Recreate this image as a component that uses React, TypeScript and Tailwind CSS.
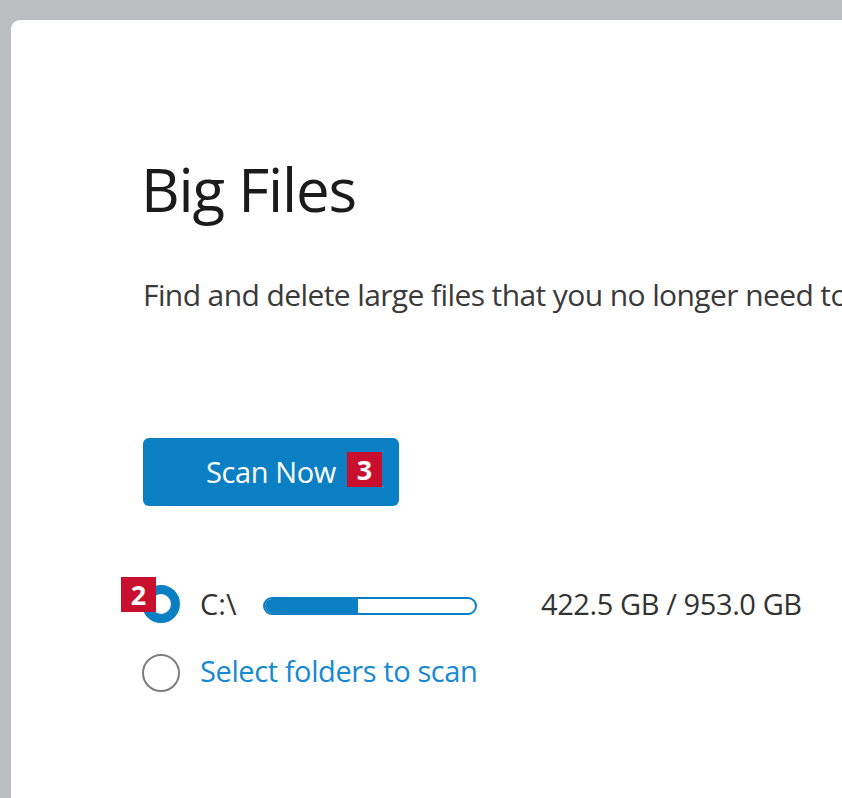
import React from "react";

const font = { fontFamily: '"Open Sans", "Noto Sans", sans-serif' };

function Badge({ n, className }: { n: string; className?: string }) {
  return (
    <span
      className={`flex h-[35px] w-[35px] items-center justify-center bg-[#c8102e] text-[27px] font-bold leading-none text-white ${className ?? ""}`}
    >
      {n}
    </span>
  );
}

export default function App() {
  const used = 422.5;
  const total = 953.0;
  const pct = (used / total) * 100;

  return (
    <div
      className="h-[798px] w-[842px] overflow-hidden bg-[#bbbdbf] pl-[11px] pt-[20px]"
      style={font}
    >
      <div className="h-full w-full rounded-tl-[9px] bg-white pl-[132px] pt-[133px]">
        <h1 className="-ml-[2px] text-[60px] leading-[72px] tracking-[-1.2px] text-[#1b1b1b]">Big Files</h1>
        <p className="mt-[52px] whitespace-nowrap text-[30px] leading-[36px] tracking-[-0.6px] text-[#3a3a3a]">
          Find and delete large files that you no longer need to free up space
        </p>

        <div className="relative mt-[125px] w-[256px]">
          <button className="flex h-[68px] w-[256px] items-center justify-center rounded-[6px] bg-[#0b7fc4] text-[29px] tracking-[-0.4px] text-white">
            Scan Now
          </button>
          <Badge n="3" className="absolute left-[204px] top-[14px]" />
        </div>

        <div className="-ml-[1px] mt-[79px] flex flex-col gap-[31px]">
          <div className="flex h-[38px] items-center">
            <div className="relative">
              <div className="h-[38px] w-[38px] rounded-full border-[9px] border-[#0b7fc4]" />
              <Badge n="2" className="absolute left-[-21px] top-[-8px]" />
            </div>
            <span className="ml-[20px] w-[63px] text-[29px] text-[#333]">C:\</span>
            <div className="mt-[3px] h-[18px] w-[214px] overflow-hidden rounded-full border-[2px] border-[#0b7fc4] bg-white">
              <div className="h-full bg-[#0b7fc4]" style={{ width: `${pct}%` }} />
            </div>
            <span className="ml-[64px] text-[29px] tracking-[-0.4px] text-[#333]">
              422.5 GB / 953.0 GB
            </span>
          </div>
          <div className="flex h-[38px] items-center">
            <div className="h-[38px] w-[38px] rounded-full border-[2px] border-[#7d7d7d]" />
            <span className="mb-[4px] ml-[20px] text-[29px] tracking-[-0.4px] text-[#1589d4]">
              Select folders to scan
            </span>
          </div>
        </div>
      </div>
    </div>
  );
}
